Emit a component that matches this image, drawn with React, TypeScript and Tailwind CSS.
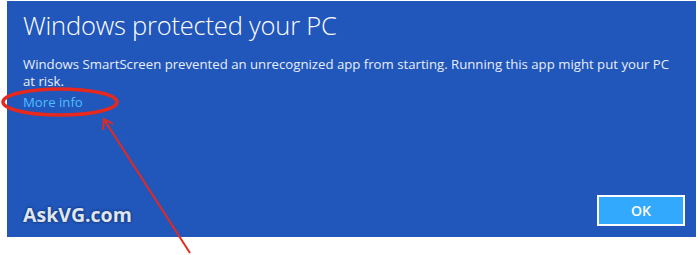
import React from 'react';

const App = () => {
  return (
    <div className="relative w-[700px] h-[255px] bg-white overflow-hidden" style={{ fontFamily: '"Open Sans", "Noto Sans", sans-serif' }}>
      {/* Dialog panel */}
      <div className="ml-[7px] mt-[1px] w-[689px] h-[236px] bg-[#2156bb] flex flex-col pl-[16px] pr-[11px] pb-[11px]">
        <h1 className="text-[25.5px] font-light text-white leading-none mt-[12px] tracking-[-0.2px]">
          Windows protected your PC
        </h1>
        <p className="mt-[17px] text-[13.2px] leading-[17px] text-[#e8eef9] w-[650px]">
          Windows SmartScreen prevented an unrecognized app from starting. Running this app might put your PC at risk.
        </p>
        <span className="mt-[3px] text-[13.2px] leading-[18px] text-[#4fbfff]">More info</span>
        <div className="mt-auto flex items-end justify-between">
          <span className="text-[19.5px] font-bold text-[#dfe6f3] leading-none mb-[2px] [text-shadow:0_0_3px_rgba(0,0,0,0.6)]">
            AskVG.com
          </span>
          <button className="w-[88px] h-[31px] bg-[#33a9fd] border-2 border-white text-white text-[14px] font-semibold">
            OK
          </button>
        </div>
      </div>

      {/* Annotation: red ellipse and arrow */}
      <svg className="absolute inset-0" width="700" height="255" viewBox="0 0 700 255">
        <ellipse cx="60" cy="102" rx="57" ry="13" fill="none" stroke="#e8281c" strokeWidth="3.5" />
        <line x1="105" y1="121" x2="190" y2="253" stroke="#e8281c" strokeWidth="2" />
        <path d="M103 130 L104 119 L113 124" fill="none" stroke="#e8281c" strokeWidth="2" />
      </svg>
    </div>
  );
};

export default App;
